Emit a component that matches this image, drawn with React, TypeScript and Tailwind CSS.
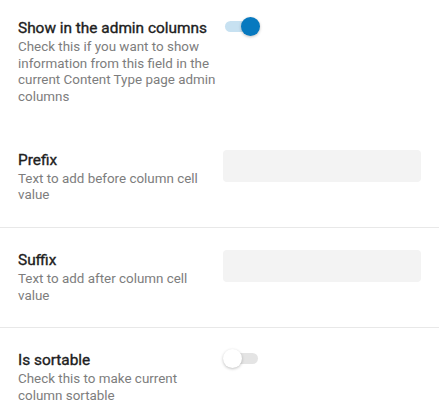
import type { ReactNode } from "react";

function Toggle({ on }: { on: boolean }) {
  return (
    <div className="relative -mt-[1px] h-[19px] w-[37px] shrink-0">
      <div
        className={`absolute left-[2px] right-[2px] top-[4px] h-[11px] rounded-full ${
          on ? "bg-[#c7e1f1]" : "bg-[#e4e4e4]"
        }`}
      />
      <div
        className={`absolute top-0 size-[19px] rounded-full shadow-[0_1px_3px_rgba(0,0,0,0.25)] ${
          on ? "right-0 bg-[#0779bf]" : "left-0 bg-white"
        }`}
      />
    </div>
  );
}

function Row({
  title,
  desc,
  className,
  children,
}: {
  title: string;
  desc: string;
  className: string;
  children: ReactNode;
}) {
  return (
    <div className={`flex items-start px-[18px] ${className}`}>
      <div className="w-[205px] shrink-0 pr-[2px]">
        <p className="text-[15.4px] leading-[20px] font-normal text-[#202020] [-webkit-text-stroke:0.35px_#202020]">
          {title}
        </p>
        <p className="mt-[1px] text-[13.4px] leading-[16.67px] text-[#7d7d7d]">{desc}</p>
      </div>
      <div className="flex flex-1 min-w-0">{children}</div>
    </div>
  );
}

export default function App() {
  return (
    <div className="w-[439px] min-h-[418px] bg-white font-['Roboto',sans-serif]">
      <Row
        title="Show in the admin columns"
        desc="Check this if you want to show information from this field in the current Content Type page admin columns"
        className="pt-[18px] pb-[22px]"
      >
        <Toggle on />
      </Row>

      <Row
        title="Prefix"
        desc="Text to add before column cell value"
        className="pt-[22px] pb-[23px] border-b border-[#e8e8e8]"
      >
        <input className="h-[32px] w-full rounded-[4px] bg-[#f3f3f3] px-3 text-sm outline-none" />
      </Row>

      <Row
        title="Suffix"
        desc="Text to add after column cell value"
        className="pt-[22px] pb-[23px] border-b border-[#e8e8e8]"
      >
        <input className="h-[32px] w-full rounded-[4px] bg-[#f3f3f3] px-3 text-sm outline-none" />
      </Row>

      <Row
        title="Is sortable"
        desc="Check this to make current column sortable"
        className="pt-[22px] pb-[22px]"
      >
        <Toggle on={false} />
      </Row>
    </div>
  );
}
